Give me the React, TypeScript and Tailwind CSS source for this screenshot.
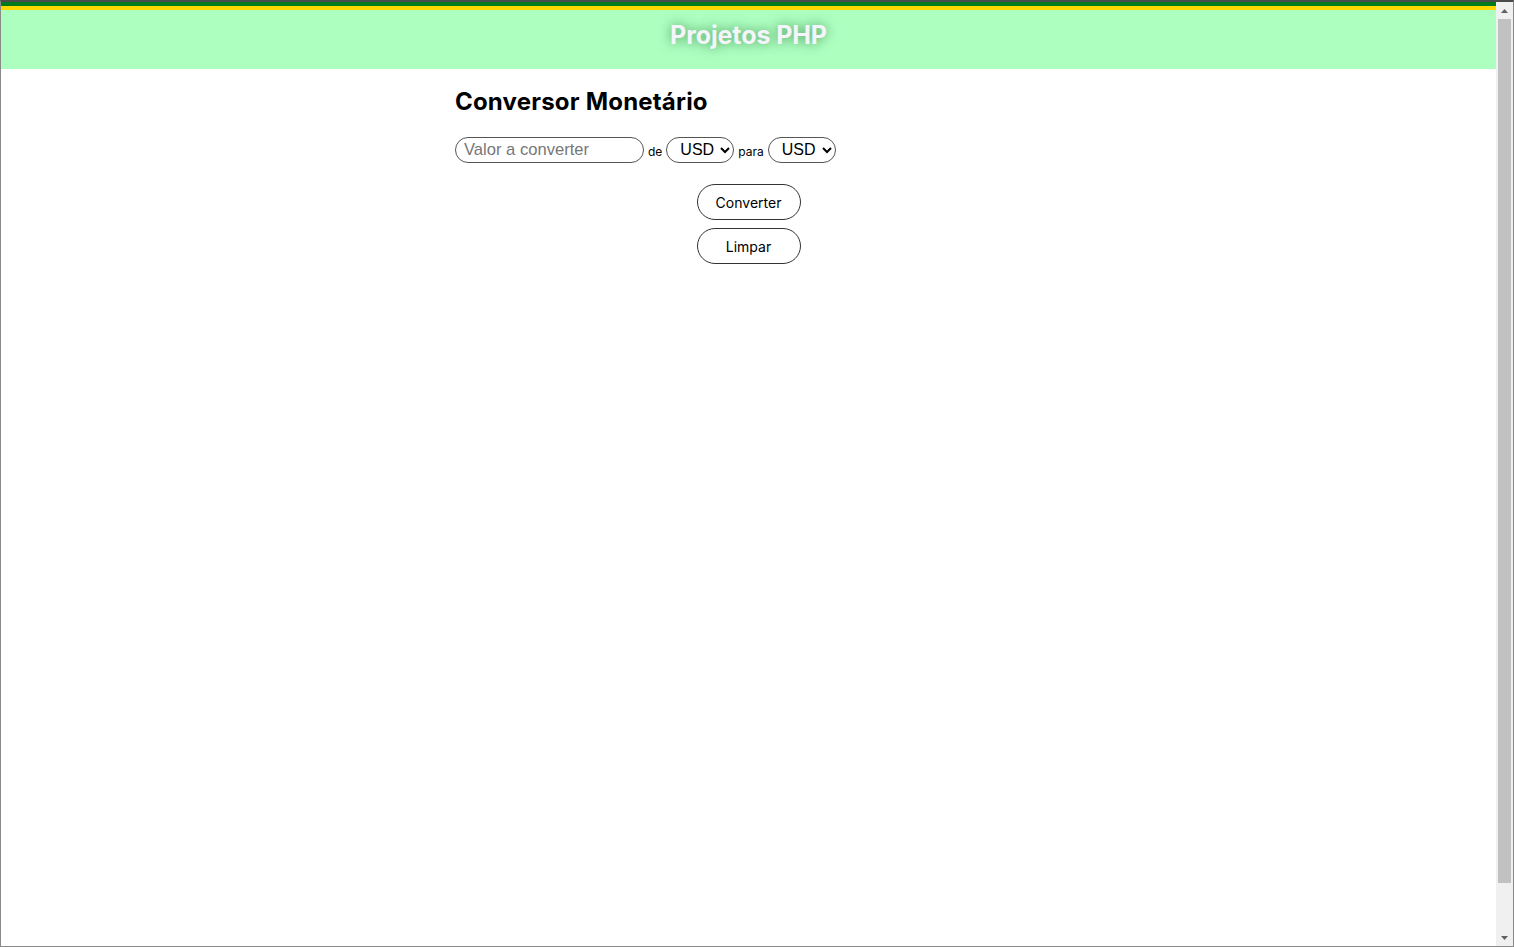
import { useState } from "react";

const moedas = ["USD", "BRL", "EUR"];

export default function App() {
    const [valor, setValor] = useState("");
    const [de, setDe] = useState("USD");
    const [para, setPara] = useState("USD");

    return (
        <div className="w-[1514px] h-[947px] flex flex-col border-t-2 border-t-[#4b4b4b] border-l border-r border-b border-[#8a8a8a] bg-white overflow-hidden">
            <div className="flex flex-1 min-h-0">
                {/* Page */}
                <div className="flex-1 min-w-0 font-['Inter',sans-serif]">
                    <div className="h-[4px] bg-[#007a1c]" />
                    <div className="h-[4px] bg-[#ffd700]" />
                    <header className="h-[59px] bg-[#adffc0] flex items-center justify-center pb-[8px]">
                        <h1 className="text-[25px] font-bold tracking-[-0.1px] text-[#f4f5fa] [text-shadow:0_0_12px_rgba(30,100,45,0.7)]">
                            Projetos PHP
                        </h1>
                    </header>

                    <main className="w-[587px] mx-auto pt-[17px]">
                        <h2 className="text-[24px] font-bold text-black tracking-[0.2px] leading-[32px]">Conversor Monetário</h2>

                        <div className="mt-[19px] flex items-center font-['Liberation_Sans',sans-serif]">
                            <input
                                value={valor}
                                onChange={(e) => setValor(e.target.value)}
                                placeholder="Valor a converter"
                                className="w-[189px] h-[26px] rounded-full border border-[#555] px-[8px] text-[16.6px] text-black placeholder-[#777] outline-none"
                            />
                            <span className="text-[12px] mx-[4px] mt-[3px] font-['Inter',sans-serif]">de</span>
                            <select
                                value={de}
                                onChange={(e) => setDe(e.target.value)}
                                className="w-[68px] h-[26px] rounded-full border border-[#555] pl-[9px] pb-[1px] text-[16px] bg-white"
                            >
                                {moedas.map((m) => <option key={m}>{m}</option>)}
                            </select>
                            <span className="text-[12px] mx-[4px] mt-[3px] font-['Inter',sans-serif]">para</span>
                            <select
                                value={para}
                                onChange={(e) => setPara(e.target.value)}
                                className="w-[68px] h-[26px] rounded-full border border-[#555] pl-[9px] pb-[1px] text-[16px] bg-white"
                            >
                                {moedas.map((m) => <option key={m}>{m}</option>)}
                            </select>
                        </div>

                        <div className="mt-[21px] flex flex-col items-center gap-[8px]">
                            <button className="w-[104px] h-[36px] rounded-full border border-[#333] text-[14px] text-black bg-white">
                                Converter
                            </button>
                            <button className="w-[104px] h-[36px] rounded-full border border-[#333] text-[14px] text-black bg-white">
                                Limpar
                            </button>
                        </div>
                    </main>
                </div>

                {/* Scrollbar */}
                <div className="w-[17px] bg-[#f0f0f0] flex flex-col items-center">
                    <div className="h-[17px] flex items-center justify-center">
                        <svg width="7" height="4" viewBox="0 0 7 4"><path d="M3.5 0L7 4H0z" fill="#606060" /></svg>
                    </div>
                    <div className="w-[13px] h-[864px] bg-[#c1c1c1]" />
                    <div className="flex-1" />
                    <div className="h-[17px] flex items-center justify-center">
                        <svg width="7" height="4" viewBox="0 0 7 4"><path d="M0 0H7L3.5 4z" fill="#606060" /></svg>
                    </div>
                </div>
            </div>
        </div>
    );
}
